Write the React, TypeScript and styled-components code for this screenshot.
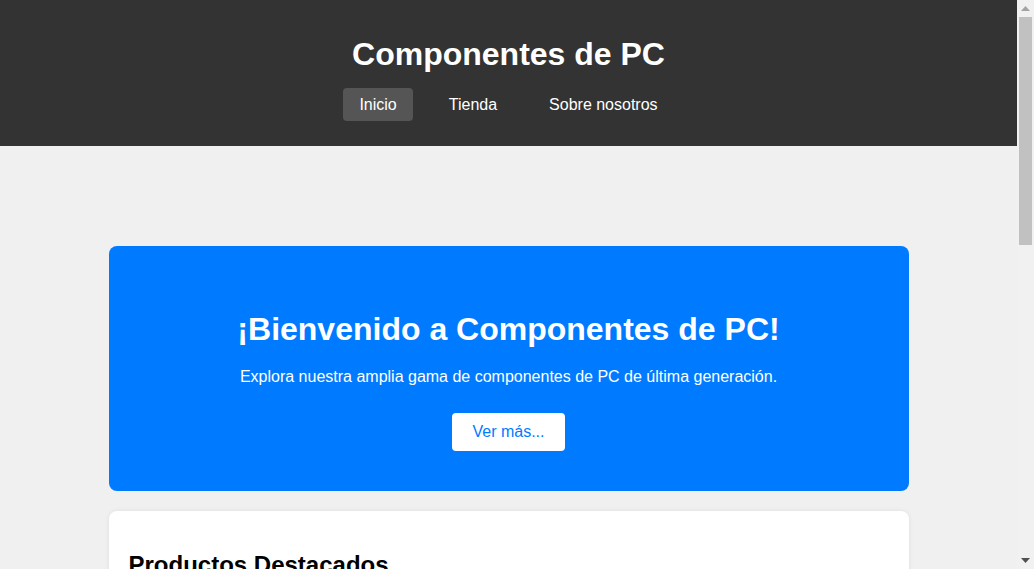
import React from "react";
import styled, { createGlobalStyle } from "styled-components";

const GlobalStyle = createGlobalStyle`
  html, body {
    margin: 0;
    padding: 0;
    background: #f0f0f0;
    font-family: "Liberation Sans", Arial, sans-serif;
    color: #000;
  }
  * { box-sizing: border-box; }
`;

const Page = styled.div`
  margin-right: 17px;
`;

const ScrollTrack = styled.div`
  position: fixed;
  top: 0;
  right: 0;
  width: 17px;
  height: 100vh;
  background: #f1f1f1;
  display: flex;
  flex-direction: column;
  align-items: center;
`;

const ScrollArrow = styled.div`
  width: 17px;
  height: 17px;
  display: flex;
  align-items: center;
  justify-content: center;
`;

const ScrollThumb = styled.div`
  width: 13px;
  height: 228px;
  background: #c1c1c1;
`;

const ScrollSpacer = styled.div`
  flex: 1;
`;

const Header = styled.header`
  background: #333;
  color: #fff;
  text-align: center;
  padding: 36px 0 25px;
`;

const SiteTitle = styled.h1`
  margin: 0 0 15px;
  font-size: 32px;
  line-height: 36.8px;
  font-weight: bold;
`;

const Nav = styled.nav`
  display: flex;
  justify-content: center;
  gap: 20px;
`;

const NavLink = styled.a<{ $active?: boolean }>`
  display: block;
  color: #fff;
  text-decoration: none;
  font-size: 16px;
  line-height: 17px;
  padding: 8px 16px;
  border-radius: 4px;
  background: ${(p) => (p.$active ? "#555" : "transparent")};
  cursor: pointer;
`;

const Main = styled.main`
  max-width: 800px;
  margin: 0 auto;
  padding-top: 100px;
  display: flex;
  flex-direction: column;
  gap: 20px;
`;

const Hero = styled.section`
  background: #007bff;
  color: #fff;
  border-radius: 8px;
  padding: 65px 20px 40px;
  display: flex;
  flex-direction: column;
  align-items: center;
  text-align: center;
`;

const HeroTitle = styled.h1`
  margin: 0 0 20px;
  font-size: 32px;
  line-height: 36.8px;
  font-weight: bold;
`;

const HeroText = styled.p`
  margin: 0 0 27px;
  font-size: 16px;
  line-height: 18.4px;
`;

const HeroButton = styled.a`
  display: inline-block;
  background: #fff;
  color: #007bff;
  text-decoration: none;
  font-size: 16px;
  line-height: 18.4px;
  padding: 10px 20px;
  border-radius: 4px;
  cursor: pointer;
`;

const Card = styled.section`
  background: #fff;
  border-radius: 8px;
  padding: 39.9px 20px 20px;
  box-shadow: 0 0 4px rgba(0, 0, 0, 0.08);
`;

const CardTitle = styled.h2`
  margin: 0 0 19.9px;
  font-size: 24px;
  line-height: 27.6px;
  font-weight: bold;
`;

const ProductGrid = styled.div`
  display: grid;
  grid-template-columns: repeat(3, 1fr);
  gap: 20px;
`;

const Product = styled.article`
  border: 1px solid #ddd;
  border-radius: 8px;
  padding: 15px;
  display: flex;
  flex-direction: column;
  align-items: center;
  text-align: center;
  height: 300px;
`;

const ProductImage = styled.div`
  width: 100%;
  height: 130px;
  background: #e4e4e4;
  border-radius: 4px;
  display: flex;
  align-items: center;
  justify-content: center;
  color: #999;
  font-size: 14px;
`;

const ProductName = styled.h3`
  margin: 15px 0 8px;
  font-size: 17px;
  line-height: 20px;
`;

const ProductPrice = styled.p`
  margin: 0 0 auto;
  color: #007bff;
  font-weight: bold;
  font-size: 16px;
`;

const BuyButton = styled.a`
  display: inline-block;
  background: #007bff;
  color: #fff;
  font-size: 15px;
  padding: 9px 18px;
  border-radius: 4px;
  text-decoration: none;
  cursor: pointer;
`;

const Footer = styled.footer`
  background: #333;
  color: #fff;
  text-align: center;
  padding: 30px 0;
  font-size: 15px;
  line-height: 17px;
`;

const products = [
  { name: "Procesador AMD Ryzen 7 5800X", price: "$299.99" },
  { name: "Tarjeta gráfica NVIDIA RTX 3070", price: "$549.99" },
  { name: "Memoria RAM Corsair 16GB DDR4", price: "$79.99" },
  { name: "SSD Samsung 970 EVO 1TB", price: "$109.99" },
  { name: "Placa base ASUS ROG B550", price: "$179.99" },
  { name: "Fuente de poder EVGA 750W", price: "$99.99" },
];

export default function App() {
  return (
    <>
      <GlobalStyle />
      <Page>
        <Header>
          <SiteTitle>Componentes de PC</SiteTitle>
          <Nav>
            <NavLink $active>Inicio</NavLink>
            <NavLink>Tienda</NavLink>
            <NavLink>Sobre nosotros</NavLink>
          </Nav>
        </Header>
        <Main>
          <Hero>
            <HeroTitle>¡Bienvenido a Componentes de PC!</HeroTitle>
            <HeroText>
              Explora nuestra amplia gama de componentes de PC de última generación.
            </HeroText>
            <HeroButton>Ver más...</HeroButton>
          </Hero>
          <Card>
            <CardTitle>Productos Destacados</CardTitle>
            <ProductGrid>
              {products.map((p) => (
                <Product key={p.name}>
                  <ProductImage>Imagen</ProductImage>
                  <ProductName>{p.name}</ProductName>
                  <ProductPrice>{p.price}</ProductPrice>
                  <BuyButton>Añadir al carrito</BuyButton>
                </Product>
              ))}
            </ProductGrid>
          </Card>
          <div />
        </Main>
        <Footer>© 2024 Componentes de PC. Todos los derechos reservados.</Footer>
      </Page>
      <ScrollTrack aria-hidden>
        <ScrollArrow>
          <svg width="9" height="5" viewBox="0 0 9 5">
            <path d="M4.5 0 L9 5 L0 5 Z" fill="#a3a3a3" />
          </svg>
        </ScrollArrow>
        <ScrollThumb />
        <ScrollSpacer />
        <ScrollArrow>
          <svg width="9" height="5" viewBox="0 0 9 5">
            <path d="M0 0 L9 0 L4.5 5 Z" fill="#505050" />
          </svg>
        </ScrollArrow>
      </ScrollTrack>
    </>
  );
}
